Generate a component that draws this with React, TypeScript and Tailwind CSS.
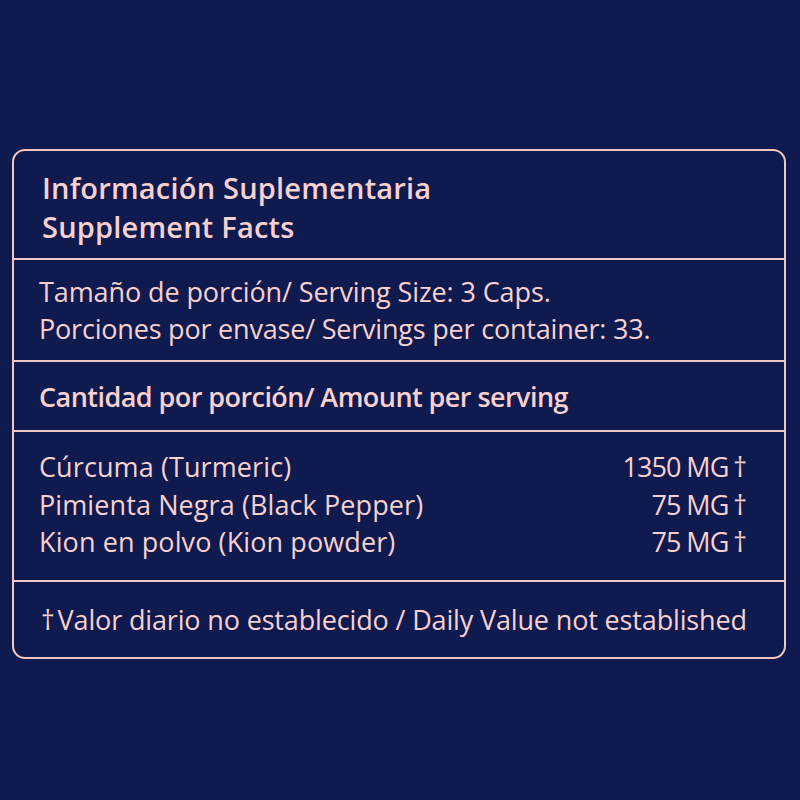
import React from 'react';

const ingredients = [
  { name: 'Cúrcuma (Turmeric)', amount: '1350 MG' },
  { name: 'Pimienta Negra (Black Pepper)', amount: '75 MG' },
  { name: 'Kion en polvo (Kion powder)', amount: '75 MG' },
];

export default function App() {
  return (
    <div
      className="w-[800px] h-[800px] bg-[#0f1a4e] text-[#f7d1cf] pt-[149px] pl-[12px]"
      style={{ fontFamily: '"Open Sans", sans-serif' }}
    >
      <div className="w-[774px] h-[510px] border-2 border-[#f2c6c5] rounded-[13px] flex flex-col">
        {/* Header */}
        <div className="h-[109px] pl-[28px] pt-[17px] border-b-2 border-[#f2c6c5]">
          <p className="text-[29px] leading-[39px] font-semibold tracking-[0.2px]">Información Suplementaria</p>
          <p className="text-[29px] leading-[39px] font-semibold tracking-[0.2px]">Supplement Facts</p>
        </div>

        {/* Serving */}
        <div className="h-[102px] pl-[25px] pt-[13px] border-b-2 border-[#f2c6c5]">
          <p className="text-[27px] leading-[37px] font-medium tracking-[-0.1px]">Tamaño de porción/ Serving Size: 3 Caps.</p>
          <p className="text-[27px] leading-[37px] font-medium tracking-[-0.2px]">Porciones por envase/ Servings per container: 33.</p>
        </div>

        {/* Amount per serving */}
        <div className="h-[70px] pl-[25px] flex items-center border-b-2 border-[#f2c6c5]">
          <p className="text-[27px] leading-[37px] font-semibold tracking-[-0.55px]">Cantidad por porción/ Amount per serving</p>
        </div>

        {/* Ingredients */}
        <div className="h-[150px] pl-[25px] pr-[38px] pt-[16px] border-b-2 border-[#f2c6c5]">
          {ingredients.map((item) => (
            <div key={item.name} className="flex justify-between text-[27px] leading-[37.5px] font-medium tracking-[0.1px]">
              <span>{item.name}</span>
              <span className="tracking-[-1px]">
                {item.amount}<span className="ml-[5px]">†</span>
              </span>
            </div>
          ))}
        </div>

        {/* Footer */}
        <div className="flex-1 pl-[27px] flex items-center">
          <p className="text-[27px] leading-[37px] font-medium tracking-[-0.15px]">
            †<span className="ml-[3px]">Valor diario no establecido / Daily Value not established</span>
          </p>
        </div>
      </div>
    </div>
  );
}
